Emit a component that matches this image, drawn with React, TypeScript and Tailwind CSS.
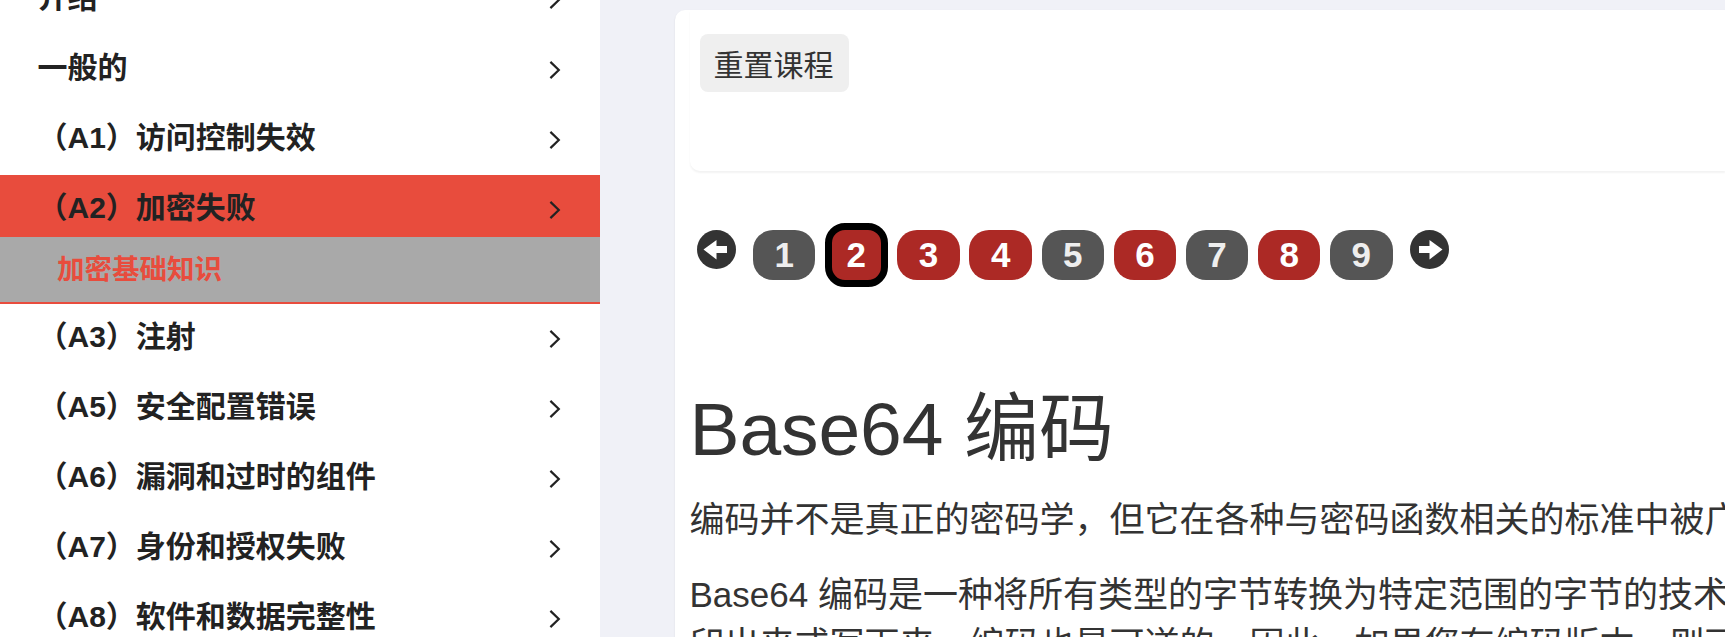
import React from "react";

const FONT = "font-['Liberation_Sans','Noto_Sans_CJK_SC',sans-serif]";

function Chevron() {
  return (
    <svg className="mt-[3px] shrink-0" width="12" height="20" viewBox="0 0 12 20" fill="none">
      <path d="M1.4 1.9 L9.8 10 L1.4 18.1" stroke="#222" strokeWidth="2.2" />
    </svg>
  );
}

function Row({ label, className = "h-[70px]" }: { label: string; className?: string }) {
  return (
    <li className={`flex shrink-0 items-center justify-between pr-[39px] pl-[37.5px] ${className}`}>
      <span className="text-[30px] leading-[40px] font-bold whitespace-nowrap text-[#222]">{label}</span>
      <Chevron />
    </li>
  );
}

function ArrowCircle({ flip = false }: { flip?: boolean }) {
  return (
    <svg width="39" height="39" viewBox="0 0 39 39" className={flip ? "-scale-x-100" : ""}>
      <circle cx="19.5" cy="19.5" r="19.5" fill="#333" />
      <path d="M6.5 19.5 L19.5 10 V16 H30 V23 H19.5 V29.5 Z" fill="#fff" />
    </svg>
  );
}

const pages = [
  { n: 1, red: false },
  { n: 2, red: true },
  { n: 3, red: true },
  { n: 4, red: true },
  { n: 5, red: false },
  { n: 6, red: true },
  { n: 7, red: false },
  { n: 8, red: true },
  { n: 9, red: false },
];

function Page({ n, red }: { n: number; red: boolean }) {
  const tone = red ? "bg-[#ac2925] text-white" : "bg-[#555] text-[#eee]";
  const shape = n === 2 ? "-my-[7px] h-16 border-[7px] border-black" : "h-[50px]";
  return (
    <span
      className={`flex w-[62.4px] shrink-0 items-center justify-center rounded-[20px] text-[35px] leading-[50px] font-bold ${tone} ${shape}`}
    >
      {n}
    </span>
  );
}

export default function App() {
  return (
    <div className={`flex h-[637px] w-full overflow-hidden bg-[#f0f1f7] ${FONT}`}>
      <aside className="w-[600px] shrink-0 overflow-hidden bg-white">
        <ul className="-mt-[37px] flex flex-col">
          <Row label="介绍" />
          <Row label="一般的" />
          <Row label="（A1）访问控制失效" />
          <Row label="（A2）加密失败" className="mt-[2px] h-[62px] bg-[#e84c3d] pt-[4px]" />
          <li className="mb-[-2px] flex h-[67px] shrink-0 items-center border-b-2 border-[#e84c3d] bg-[#a9a9a9] pt-px pl-[57px] text-[27.5px] font-bold text-[#e84c3d]">
            加密基础知识
          </li>
          <Row label="（A3）注射" />
          <Row label="（A5）安全配置错误" />
          <Row label="（A6）漏洞和过时的组件" />
          <Row label="（A7）身份和授权失败" />
          <Row label="（A8）软件和数据完整性" />
        </ul>
      </aside>

      <main className="mt-[10px] ml-[75px] h-[700px] min-w-0 flex-1 overflow-hidden rounded-tl-[10px] bg-white pl-[14.5px] text-[#333] shadow-[0_1px_2px_rgba(0,0,0,0.1)]">
        <div className="h-[161px] rounded-bl-[10px] pt-6 pl-[10.5px] shadow-[0_2px_2px_rgba(0,0,0,0.05)]">
          <button className="flex h-[58px] w-[149px] items-center justify-center rounded-[8px] bg-[#efefef] pt-[6px] pr-[2px] text-[30px] leading-[40px]">
            重置课程
          </button>
        </div>

        <nav className="mt-[59px] flex h-[50px] items-start pl-[7.5px]">
          <ArrowCircle />
          <div className="mr-[17px] ml-[17px] flex gap-[9.75px]">
            {pages.map((p) => (
              <Page key={p.n} n={p.n} red={p.red} />
            ))}
          </div>
          <ArrowCircle flip />
        </nav>

        <h1 className="mt-[108px] text-[75px] leading-[82px] tracking-[-0.1px] whitespace-nowrap">Base64 编码</h1>
        <p className="mt-[25px] text-[35px] leading-[50px] whitespace-nowrap">
          编码并不是真正的密码学，但它在各种与密码函数相关的标准中被广泛使用。
        </p>
        <p className="mt-[25px] text-[35px] leading-[50px] whitespace-nowrap">
          Base64 编码是一种将所有类型的字节转换为特定范围的字节的技术。
          <br />
          印出来或写下来。编码也是可逆的。因此，如果您有编码版本，则可以
        </p>
      </main>
    </div>
  );
}
